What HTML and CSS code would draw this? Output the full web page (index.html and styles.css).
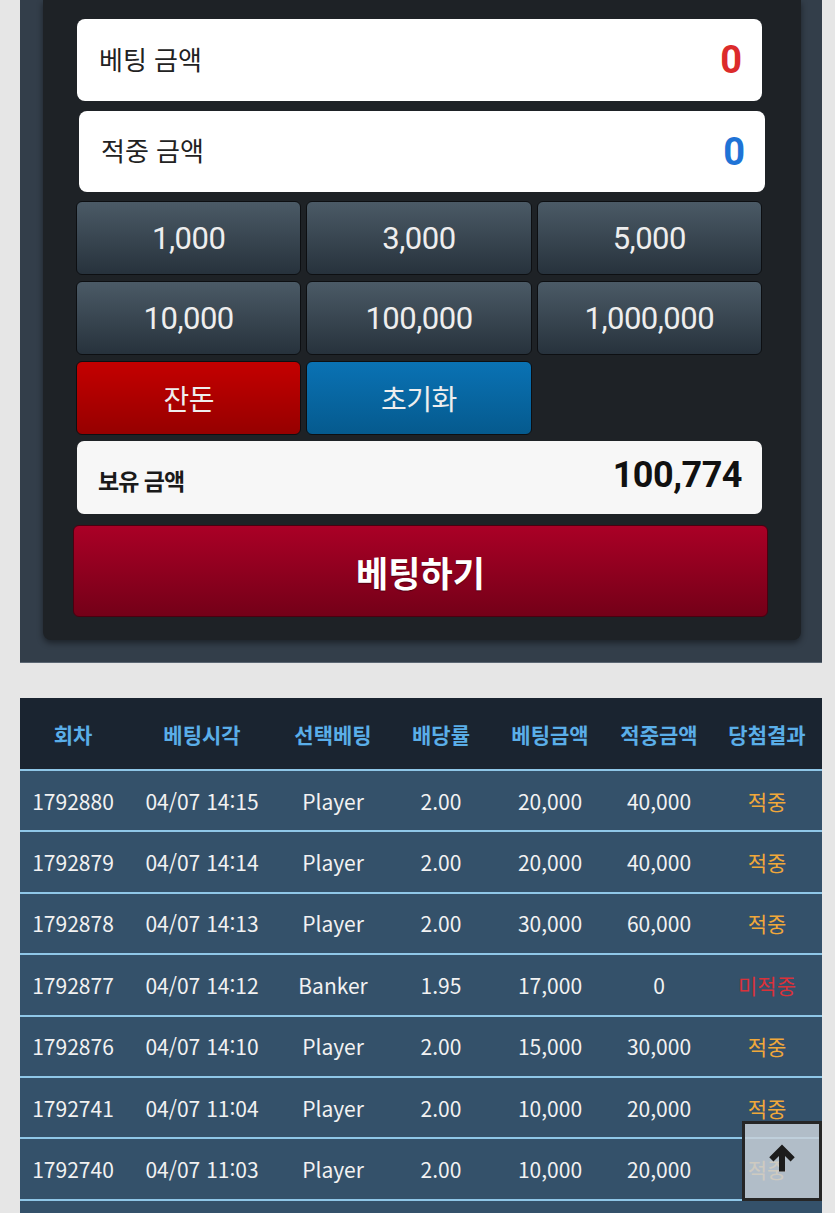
FILE: index.html
```html
<!DOCTYPE html>
<html lang="ko">
<head>
    <meta charset="UTF-8">
    <meta name="viewport" content="width=device-width, initial-scale=1.0">
    <title>베팅</title>
    <link rel="stylesheet" href="styles.css">
</head>
<body>
    <div class="outer">
        <div class="panel">
            <div class="amount-box">
                <span class="label">베팅 금액</span>
                <span class="value red">0</span>
            </div>
            <div class="amount-box shift">
                <span class="label">적중 금액</span>
                <span class="value blue">0</span>
            </div>
            <div class="chips">
                <button class="chip">1,000</button>
                <button class="chip">3,000</button>
                <button class="chip">5,000</button>
                <button class="chip">10,000</button>
                <button class="chip">100,000</button>
                <button class="chip">1,000,000</button>
                <button class="chip change">잔돈</button>
                <button class="chip reset">초기화</button>
            </div>
            <div class="balance">
                <span class="label">보유 금액</span>
                <span class="value">100,774</span>
            </div>
            <button class="bet-btn">베팅하기</button>
        </div>
    </div>

    <table class="history">
        <tr>
            <th class="c1">회차</th>
            <th class="c2">베팅시각</th>
            <th class="c3">선택베팅</th>
            <th class="c4">배당률</th>
            <th class="c5">베팅금액</th>
            <th class="c6">적중금액</th>
            <th class="c7">당첨결과</th>
        </tr>
        <tr>
            <td>1792880</td><td>04/07 14:15</td><td>Player</td><td>2.00</td><td>20,000</td><td>40,000</td><td class="win">적중</td>
        </tr>
        <tr>
            <td>1792879</td><td>04/07 14:14</td><td>Player</td><td>2.00</td><td>20,000</td><td>40,000</td><td class="win">적중</td>
        </tr>
        <tr>
            <td>1792878</td><td>04/07 14:13</td><td>Player</td><td>2.00</td><td>30,000</td><td>60,000</td><td class="win">적중</td>
        </tr>
        <tr>
            <td>1792877</td><td>04/07 14:12</td><td>Banker</td><td>1.95</td><td>17,000</td><td>0</td><td class="lose">미적중</td>
        </tr>
        <tr>
            <td>1792876</td><td>04/07 14:10</td><td>Player</td><td>2.00</td><td>15,000</td><td>30,000</td><td class="win">적중</td>
        </tr>
        <tr>
            <td>1792741</td><td>04/07 11:04</td><td>Player</td><td>2.00</td><td>10,000</td><td>20,000</td><td class="win">적중</td>
        </tr>
        <tr>
            <td>1792740</td><td>04/07 11:03</td><td>Player</td><td>2.00</td><td>10,000</td><td>20,000</td><td class="win">적중</td>
        </tr>
        <tr class="empty">
            <td colspan="7"></td>
        </tr>
    </table>

    <a class="to-top" href="#">
        <svg width="36" height="36" viewBox="0 0 24 24">
            <path d="M12 3 L3.5 11.5 L6.3 14.3 L10 10.6 L10 21 L14 21 L14 10.6 L17.7 14.3 L20.5 11.5 Z" fill="#1c1c1c"/>
        </svg>
    </a>
</body>
</html>
```

FILE: styles.css
```css
body{
    margin: 0;
    background-color: #e6e6e6;
    font-family: "Noto Sans CJK KR", "Noto Sans", sans-serif;
    height: 1213px;
    overflow: hidden;
}
.outer{
    margin: 0 13px 0 20px;
    background-color: #333e4a;
    border-bottom: 1px solid #5b6672;
    padding: 0 21px 22px 23px;
}
.panel{
    background-color: #1e2226;
    border-radius: 0 0 8px 8px;
    box-shadow: 0 3px 6px rgba(0,0,0,0.45);
    padding: 19px 39px 23px 34px;
}
.amount-box{
    background-color: #fff;
    border-radius: 8px;
    height: 82px;
    display: flex;
    align-items: center;
    justify-content: space-between;
    padding: 0 20px 0 22px;
    box-sizing: border-box;
}
.amount-box.shift{
    margin: 10px -3px 0 2px;
    height: 81px;
}
.amount-box .label{
    font-size: 26px;
    color: #222;
    margin-top: -4px;
}
.amount-box .value{
    font-family: Roboto, sans-serif;
    font-weight: bold;
    font-size: 38px;
}
.red{ color: #dc2b2b; }
.blue{ color: #1f73d6; }
.chips{
    display: grid;
    grid-template-columns: repeat(3, 1fr);
    grid-auto-rows: 74px;
    gap: 6px 5px;
    margin-top: 9px;
    margin-left: -1px;
}
.chip{
    font-family: Roboto, sans-serif;
    font-size: 31px;
    color: #eeeeee;
    background: linear-gradient(#4b5a66, #27323c);
    border: 1px solid #0d0f12;
    border-radius: 6px;
    padding: 0;
    letter-spacing: -0.5px;
}
.chip.change{
    background: linear-gradient(#c40000, #960000);
    font-family: "Noto Sans CJK KR", sans-serif;
    font-size: 28px;
}
.chip.reset{
    background: linear-gradient(#0a72b4, #055a8e);
    font-family: "Noto Sans CJK KR", sans-serif;
    font-size: 28px;
}
.balance{
    margin-top: 6px;
    background-color: #f7f7f7;
    border-radius: 7px;
    height: 73px;
    display: flex;
    align-items: center;
    justify-content: space-between;
    padding: 0 20px 0 21px;
}
.balance .label{
    font-size: 23px;
    font-weight: bold;
    color: #1a1a1a;
    margin-top: 4px;
    letter-spacing: -1px;
}
.balance .value{
    font-family: Roboto, sans-serif;
    font-size: 36px;
    font-weight: bold;
    color: #111;
    letter-spacing: -0.5px;
    margin-top: -6px;
}
.bet-btn{
    display: block;
    width: calc(100% + 10px);
    margin: 11px -6px 0 -4px;
    height: 92px;
    background: linear-gradient(#aa0026, #740018);
    border: 1px solid #4a0010;
    border-radius: 6px;
    color: #fff;
    font-family: "Noto Sans CJK KR", sans-serif;
    font-size: 35px;
    font-weight: bold;
    text-shadow: 0 1px 1px rgba(0,0,0,0.4);
}
.history{
    margin: 35px 13px 0 20px;
    width: 802px;
    border-collapse: collapse;
    table-layout: fixed;
    background-color: #34516a;
}
.history th{
    background-color: #1a2430;
    color: #5aaee8;
    font-size: 21px;
    font-weight: bold;
    height: 71px;
    padding: 0;
    border-bottom: 2px solid #8fc7e8;
}
.history td{
    color: #f2f2f2;
    font-size: 21px;
    text-align: center;
    height: 59.4px;
    border-bottom: 2px solid #8fc7e8;
    padding: 0;
}
.c1{ width: 106px; }
.c2{ width: 152px; }
.c3{ width: 110px; }
.c4{ width: 106px; }
.c5{ width: 112px; }
.c6{ width: 106px; }
.c7{ width: 110px; }
.history td.win{ color: #f0a83a; }
.history td.lose{ color: #d8323a; }
.to-top{
    position: fixed;
    left: 742px;
    top: 1121px;
    width: 74px;
    height: 74px;
    border: 3px solid #262626;
    background-color: rgba(200,208,216,0.85);
    display: flex;
    align-items: center;
    justify-content: center;
}
.to-top svg{
    margin-top: -6px;
}
```
